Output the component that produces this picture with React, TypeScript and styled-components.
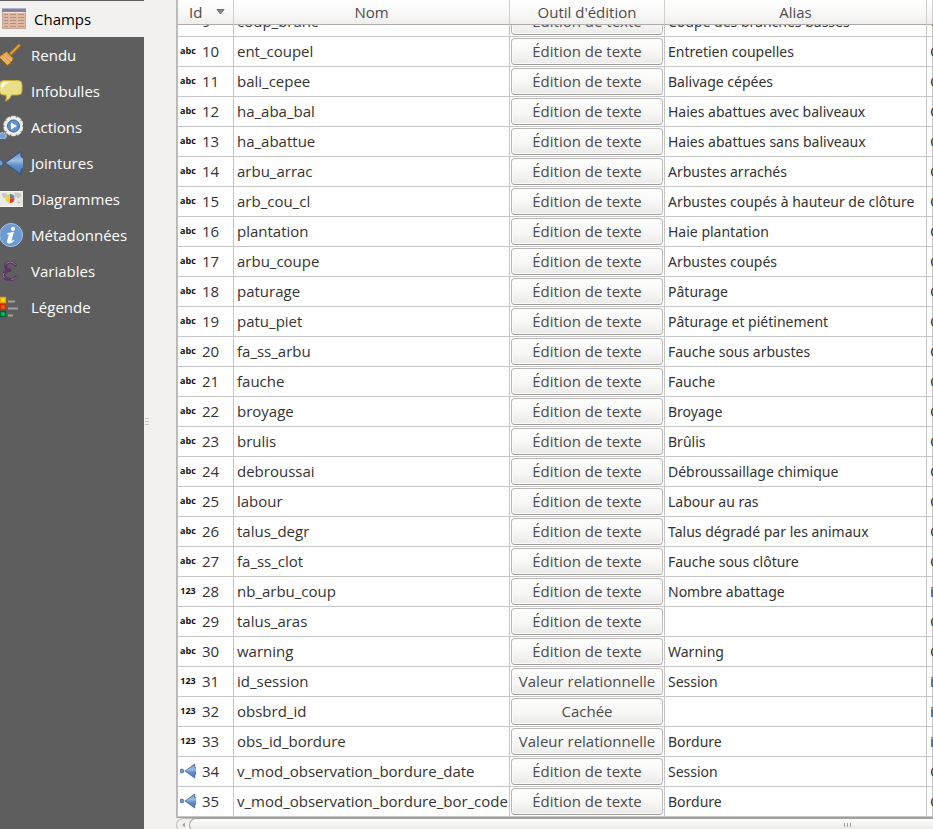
import React, { useLayoutEffect, useRef } from "react";
import styled, { createGlobalStyle, css } from "styled-components";

const GlobalStyle = createGlobalStyle`
  * { box-sizing: border-box; }
  html, body, #root { height: 100%; }
  body {
    margin: 0;
    background: #f2f1f0;
    color: #333333;
    font-family: "Open Sans", "Noto Sans", sans-serif;
    font-size: 15px;
    line-height: 20px;
    overflow: hidden;
  }
`;

const Window = styled.div`
  display: flex;
  height: 100vh;
  overflow: hidden;
`;

const Sidebar = styled.nav`
  flex: 0 0 144px;
  display: flex;
  flex-direction: column;
  padding-top: 1px;
  background: #5e5e5e;
`;

const SidebarItem = styled.button<{ $active: boolean }>`
  display: flex;
  align-items: center;
  gap: 8px;
  height: 36px;
  padding: 0;
  border: 0;
  background: transparent;
  color: #ffffff;
  font: inherit;
  text-align: left;
  white-space: nowrap;
  ${(p) =>
    p.$active &&
    css`
      padding-left: 2px;
      background: #f2f1f0;
      color: #000000;
    `}
`;

const SidebarIcon = styled.svg<{ $active: boolean }>`
  flex: none;
  width: 24px;
  height: 24px;
  margin-left: ${(p) => (p.$active ? "0" : "-1px")};
`;

const Splitter = styled.div`
  flex: 0 0 32px;
  display: flex;
  flex-direction: column;
  justify-content: center;
  gap: 2px;
  padding: 14px 0 0 1px;
`;

const Grip = styled.span`
  width: 4px;
  height: 1px;
  background: #c6c4c2;
`;

const Main = styled.main`
  flex: 1;
  min-width: 0;
  display: flex;
  flex-direction: column;
`;

const TableFrame = styled.div`
  flex: 1;
  min-height: 0;
  overflow: hidden;
  border-left: 2px solid #bdbbb9;
  border-bottom: 1px solid #a3a19f;
  background: #ffffff;
`;

const FieldTable = styled.table`
  width: 100%;
  table-layout: fixed;
  border-collapse: separate;
  border-spacing: 0;
`;

const Column = styled.col<{ $width?: number }>`
  width: ${(p) => (p.$width ? `${p.$width}px` : "auto")};
`;

const HeadCell = styled.th`
  position: sticky;
  top: 0;
  z-index: 1;
  height: 25px;
  padding: 0;
  border-right: 1px solid #d2d0ce;
  border-bottom: 1px solid #aeaba8;
  background: linear-gradient(#ffffff, #f9f9f8 50%, #efeeed);
  color: #4c4c4c;
  font-weight: 400;
  white-space: nowrap;
`;

const SortLabel = styled.span`
  display: flex;
  align-items: center;
  justify-content: space-between;
  padding: 0 8px 0 11px;
`;

const Cell = styled.td`
  height: 30px;
  padding: 0 0 2px 3px;
  border-right: 1px solid #c6c6c6;
  border-bottom: 1px solid #c6c6c6;
  white-space: nowrap;
`;

const IdCell = styled(Cell)`
  padding-left: 2px;
`;

const ToolCell = styled(Cell)`
  padding: 0 1px;
`;

const AliasCell = styled(Cell)`
  padding-bottom: 0;
  font-family: "Noto Sans", "Open Sans", sans-serif;
  font-size: 14px;
`;

const IdContent = styled.span`
  display: flex;
  align-items: center;
  gap: 6px;
`;

const TypeTag = styled.span`
  width: 16px;
  color: #111111;
  font-size: 9px;
  font-weight: 700;
  line-height: 16px;
  text-align: center;
`;

const TypeIcon = styled.svg`
  width: 16px;
  height: 16px;
`;

const ToolButton = styled.button`
  display: block;
  width: 100%;
  height: 27px;
  padding: 0 0 2px;
  border: 1px solid #bab8b6;
  border-bottom-color: #9f9d9b;
  border-radius: 4px;
  background: linear-gradient(#ffffff, #f8f8f7 50%, #ebeae9);
  box-shadow: inset 0 0 0 1px #fbfbfb;
  color: #4c4c4c;
  font: inherit;
`;

const ScrollTrack = styled.div`
  flex: 0 0 11px;
  display: flex;
  overflow: hidden;
`;

const ScrollStep = styled.button`
  flex: 0 0 20px;
  height: 14px;
  margin-right: -7px;
  padding: 0 0 0 2px;
  display: flex;
  align-items: center;
  border: 1px solid #c0bebc;
  border-right: 0;
  border-radius: 7px 0 0 7px;
  background: #f2f1f0;
`;

const ScrollThumb = styled.div`
  flex: 1;
  height: 14px;
  display: flex;
  align-items: center;
  justify-content: flex-end;
  gap: 2px;
  padding-right: 82px;
  border: 1px solid #a3a19f;
  border-right: 0;
  border-radius: 7px 0 0 7px;
  background: linear-gradient(#ffffff, #e6e5e4);
`;

const ThumbMark = styled.span`
  width: 1px;
  height: 4px;
  background: #a3a19f;
`;

function JoinShape() {
  return (
    <>
      <defs>
        <linearGradient id="joinFill" x1="0" y1="0" x2="0" y2="1">
          <stop offset="0" stopColor="#5f8cc4" />
          <stop offset="0.4" stopColor="#9dbce0" />
          <stop offset="0.6" stopColor="#5f8fc9" />
          <stop offset="1" stopColor="#4a7cc0" />
        </linearGradient>
      </defs>
      <circle cx="1" cy="12" r="3.2" fill="#6f9dd0" stroke="#2f5382" strokeWidth="1" />
      <path d="M6 12 22 .5v5l2.500 2v9l-2.500 2v5Z" fill="url(#joinFill)" stroke="#2c4d7d" strokeWidth="1" strokeLinejoin="round" />
    </>
  );
}

const gearTeeth = [0, 36, 72, 108, 144, 180, 216, 252, 288, 324];

const icons: Record<string, React.ReactNode> = {
  Champs: (
    <>
      <rect x=".5" y="1.500" width="23" height="20" fill="#dcb9a5" stroke="#c7a695" />
      <rect x="0" y="1" width="24" height="4" fill="#85819b" />
      <path d="M0 1.500h24" stroke="#b4b1c4" />
      <path d="M1 5.500h22" stroke="#f4e4da" />
      <path d="M2 7.500h4M8 7.500h6M16 7.500h6M2 10.500h4M8 10.500h6M16 10.500h6M2 13.500h4M8 13.500h6M16 13.500h6M2 16.500h4M8 16.500h6M16 16.500h6M2 19.500h4M8 19.500h6M16 19.500h6" stroke="#b78d78" strokeWidth="1" />
    </>
  ),
  Rendu: (
    <>
      <path d="M20 2.500 12 10.500" stroke="#9b681d" strokeWidth="3.600" strokeLinecap="round" />
      <path d="M20 2.500 12 10.500" stroke="#e0a040" strokeWidth="2" strokeLinecap="round" />
      <path d="M7.500 8.500 14.500 15.500 12 19 8.500 22.500 0 14Z" fill="#e0a455" stroke="#a56c1c" strokeLinejoin="round" />
      <path d="m3 12.500 8 8M5.500 11 13 18M1.500 14l7 7" stroke="#f1c581" strokeWidth="1" />
    </>
  ),
  Infobulles: (
    <>
      <path d="M4.500 1.500h14.500q4 0 4 4v6.500q0 4-4 4h-6.500q-1 4-6 6 1.500-3 .5-6H4.500q-4 0-4-4V5.500q0-4 4-4Z" fill="#eadf86" stroke="#c5a936" />
      <path d="M2.500 10V6.500q0-3 3-3H11Q5 4.500 2.500 10Z" fill="#ffffff" />
    </>
  ),
  Actions: (
    <>
      <g fill="#eeeeec" stroke="#c0c0bc" strokeWidth=".5">
        {gearTeeth.map((a) => (
          <rect key={a} x="12" y="1" width="5" height="5" rx="1" transform={`rotate(${a} 14.500 11)`} />
        ))}
      </g>
      <circle cx="14.500" cy="11" r="8.500" fill="#eeeeec" />
      <circle cx="14.500" cy="11" r="6" fill="#5f92cc" stroke="#3b6396" />
      <path d="m12 7.500 6 3.500-6 3.500Z" fill="#ffffff" />
      <circle cx="3.500" cy="21" r="3.500" fill="#72a1d5" stroke="#c4cbd2" strokeWidth="1.500" strokeDasharray="1.500 1" />
    </>
  ),
  Jointures: <JoinShape />,
  Diagrammes: (
    <>
      <rect x=".5" y="4.500" width="24" height="15" fill="#e9e9e6" stroke="#f7f7f5" />
      <path d="M2.500 6h4l2 2-2.500 3.500-2-1Zm13-.5 6 .5 1 3-3 2.500-2-1.500-2 .5Zm3 8.500 3 .5-.5 2-2.500-.5Z" fill="#c9c9c4" />
      <circle cx="11" cy="11.500" r="4.500" fill="#f4d03e" />
      <path d="M11 11.500V7a4.500 4.500 0 0 1 4.500 4.500Z" fill="#5b84b4" />
      <path d="M11 11.500h4.500A4.500 4.500 0 0 1 11 16Z" fill="#dc3b3b" />
    </>
  ),
  Métadonnées: (
    <>
      <circle cx="12" cy="12" r="11.500" fill="#6b9bd2" stroke="#a9c5e6" strokeWidth="1" />
      <circle cx="14" cy="5.800" r="2.100" fill="#ffffff" />
      <path d="M8.500 10q3.500-.2 6.500-1.200l-2.600 8.700q-.2 1 2.500-.8l.5.700q-3 3.200-5.800 3-2.200-.4-1.400-3.200l1.700-5.700h-1.700Z" fill="#ffffff" />
    </>
  ),
  Variables: (
    <>
      <path d="M17 7.500Q16 3.500 11.500 3.500 6.500 3.500 6.500 7t5.500 4.500Q5 11.500 5 16 5 20.500 11 20.500q5.500 0 7-4" fill="none" stroke="#5c3566" strokeWidth="3" />
      <path d="M16.500 6Q15 3 11.500 3 8 3 6.500 5.500M5 14q-2 3 .5 5M12 20.500q4 0 6-3" fill="none" stroke="#a389ad" strokeWidth=".8" />
    </>
  ),
  Légende: (
    <>
      <path d="M9 6.500h7M9 13.500h10M9 20.500h5" stroke="#a0a0a0" strokeWidth="2" />
      <rect x="1.500" y="2.500" width="5" height="5" fill="#ffe21f" stroke="#f0a000" strokeWidth="1.500" />
      <rect x="1.500" y="9.500" width="5" height="5" fill="#ff5a1a" stroke="#c62f00" strokeWidth="1.500" />
      <rect x="1.500" y="16.500" width="5" height="5" fill="#00c060" stroke="#00603a" strokeWidth="1.500" />
    </>
  ),
};

const sections = Object.keys(icons);

type Kind = "abc" | "123" | "join";
type Field = [id: number, kind: Kind, name: string, tool: string, alias: string, type: string];

const TEXT = "Édition de texte";
const RELATION = "Valeur relationnelle";

const fields: Field[] = [
  [9, "abc", "coup_branc", TEXT, "Coupe des branches basses", "QString"],
  [10, "abc", "ent_coupel", TEXT, "Entretien coupelles", "QString"],
  [11, "abc", "bali_cepee", TEXT, "Balivage cépées", "QString"],
  [12, "abc", "ha_aba_bal", TEXT, "Haies abattues avec baliveaux", "QString"],
  [13, "abc", "ha_abattue", TEXT, "Haies abattues sans baliveaux", "QString"],
  [14, "abc", "arbu_arrac", TEXT, "Arbustes arrachés", "QString"],
  [15, "abc", "arb_cou_cl", TEXT, "Arbustes coupés à hauteur de clôture", "QString"],
  [16, "abc", "plantation", TEXT, "Haie plantation", "QString"],
  [17, "abc", "arbu_coupe", TEXT, "Arbustes coupés", "QString"],
  [18, "abc", "paturage", TEXT, "Pâturage", "QString"],
  [19, "abc", "patu_piet", TEXT, "Pâturage et piétinement", "QString"],
  [20, "abc", "fa_ss_arbu", TEXT, "Fauche sous arbustes", "QString"],
  [21, "abc", "fauche", TEXT, "Fauche", "QString"],
  [22, "abc", "broyage", TEXT, "Broyage", "QString"],
  [23, "abc", "brulis", TEXT, "Brûlis", "QString"],
  [24, "abc", "debroussai", TEXT, "Débroussaillage chimique", "QString"],
  [25, "abc", "labour", TEXT, "Labour au ras", "QString"],
  [26, "abc", "talus_degr", TEXT, "Talus dégradé par les animaux", "QString"],
  [27, "abc", "fa_ss_clot", TEXT, "Fauche sous clôture", "QString"],
  [28, "123", "nb_arbu_coup", TEXT, "Nombre abattage", "int"],
  [29, "abc", "talus_aras", TEXT, "", "QString"],
  [30, "abc", "warning", TEXT, "Warning", "QString"],
  [31, "123", "id_session", RELATION, "Session", "int"],
  [32, "123", "obsbrd_id", "Cachée", "", "int"],
  [33, "123", "obs_id_bordure", RELATION, "Bordure", "int"],
  [34, "join", "v_mod_observation_bordure_date", TEXT, "Session", "QString"],
  [35, "join", "v_mod_observation_bordure_bor_code", TEXT, "Bordure", "QString"],
];

export default function App() {
  const frame = useRef<HTMLDivElement>(null);

  useLayoutEffect(() => {
    const el = frame.current;
    if (el) el.scrollTop = el.scrollHeight;
  }, []);

  return (
    <Window>
      <GlobalStyle />
      <Sidebar>
        {sections.map((label) => {
          const active = label === "Champs";
          return (
            <SidebarItem key={label} type="button" $active={active} aria-current={active ? "page" : undefined}>
              <SidebarIcon $active={active} viewBox="0 0 24 24" aria-hidden="true">
                {icons[label]}
              </SidebarIcon>
              {label}
            </SidebarItem>
          );
        })}
      </Sidebar>
      <Splitter>
        <Grip />
        <Grip />
        <Grip />
      </Splitter>
      <Main>
        <TableFrame ref={frame}>
          <FieldTable>
            <colgroup>
              <Column $width={56} />
              <Column $width={276} />
              <Column $width={155} />
              <Column $width={262} />
              <Column />
            </colgroup>
            <thead>
              <tr>
                <HeadCell scope="col">
                  <SortLabel>
                    Id
                    <svg width="9" height="6" viewBox="0 0 9 6" aria-hidden="true">
                      <path d="M1 .5h7L4.500 5Z" fill="#8a8a8a" stroke="#6f6f6f" />
                    </svg>
                  </SortLabel>
                </HeadCell>
                <HeadCell scope="col">Nom</HeadCell>
                <HeadCell scope="col">Outil d'édition</HeadCell>
                <HeadCell scope="col">Alias</HeadCell>
                <HeadCell scope="col" aria-label="Type" />
              </tr>
            </thead>
            <tbody>
              {fields.map(([id, kind, name, tool, alias, type]) => (
                <tr key={id}>
                  <IdCell>
                    <IdContent>
                      {kind === "join" ? (
                        <TypeIcon viewBox="-2 0 26 24" aria-hidden="true">
                          <JoinShape />
                        </TypeIcon>
                      ) : (
                        <TypeTag>{kind}</TypeTag>
                      )}
                      {id}
                    </IdContent>
                  </IdCell>
                  <Cell>{name}</Cell>
                  <ToolCell>
                    <ToolButton type="button">{tool}</ToolButton>
                  </ToolCell>
                  <AliasCell>{alias}</AliasCell>
                  <Cell>{type}</Cell>
                </tr>
              ))}
            </tbody>
          </FieldTable>
        </TableFrame>
        <ScrollTrack>
          <ScrollStep type="button" aria-label="Défiler à gauche">
            <svg width="9" height="6" viewBox="0 0 9 6" aria-hidden="true">
              <path d="M6 .5v5L3 3Z" fill="#a8a6a4" />
            </svg>
          </ScrollStep>
          <ScrollThumb>
            <ThumbMark />
            <ThumbMark />
            <ThumbMark />
          </ScrollThumb>
        </ScrollTrack>
      </Main>
    </Window>
  );
}
